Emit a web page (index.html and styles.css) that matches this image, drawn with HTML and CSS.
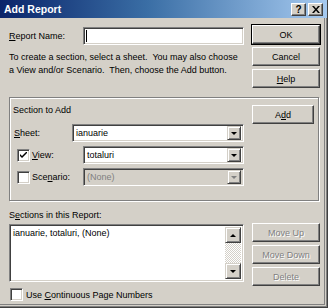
FILE: index.html
```html
<!DOCTYPE html>
<html lang="en">

<head>
    <meta charset="UTF-8">
    <title>Add Report</title>
    <link rel="stylesheet" href="styles.css">
</head>

<body>

    <div class="window">
        <div class="titlebar">
            <span class="title">Add Report</span>
            <div class="title-buttons">
                <span class="tbtn">?</span>
                <span class="tbtn">
                    <svg width="8" height="7" viewBox="0 0 8 7">
                        <path d="M0 0h2l2 2.5L6 0h2L5 3.5 8 7H6L4 4.5 2 7H0l3-3.5z" fill="#000" />
                    </svg>
                </span>
            </div>
        </div>

        <div class="content">
            <div class="top">
                <div class="col-left">
                    <div class="name-row">
                        <label class="name-label"><u>R</u>eport Name:</label>
                        <div class="field name-input"><span class="caret"></span></div>
                    </div>
                    <p class="hint">To create a section, select a sheet.&nbsp; You may also choose<br>a View and/or Scenario.&nbsp; Then, choose the Add button.</p>
                </div>
                <div class="col-right">
                    <button class="btn default">OK</button>
                    <button class="btn">Cancel</button>
                    <button class="btn"><u>H</u>elp</button>
                </div>
            </div>

            <div class="group">
                <div class="group-main">
                    <div class="group-title">Section to Add</div>
                    <div class="row">
                        <label class="row-label sheet-label"><u>S</u>heet:</label>
                        <div class="field combo sheet-combo">
                            <span class="combo-text">ianuarie</span>
                            <span class="drop"><i class="arrow"></i></span>
                        </div>
                    </div>
                    <div class="row">
                        <span class="check checked">
                            <svg width="7" height="7" viewBox="0 0 7 7">
                                <path d="M0 2l2 2 5-5v2L2 6 0 4z" fill="#000" />
                            </svg>
                        </span>
                        <label class="row-label check-label"><u>V</u>iew:</label>
                        <div class="field combo">
                            <span class="combo-text">totaluri</span>
                            <span class="drop"><i class="arrow"></i></span>
                        </div>
                    </div>
                    <div class="row">
                        <span class="check"></span>
                        <label class="row-label check-label">Sce<u>n</u>ario:</label>
                        <div class="field combo disabled">
                            <span class="combo-text">(None)</span>
                            <span class="drop"><i class="arrow"></i></span>
                        </div>
                    </div>
                </div>
                <div class="group-side">
                    <button class="btn add-btn">A<u>d</u>d</button>
                </div>
            </div>

            <div class="sections-label">S<u>e</u>ctions in this Report:</div>
            <div class="sections">
                <div class="field listbox">
                    <div class="list-items">
                        <div class="list-item">ianuarie, totaluri, (None)</div>
                    </div>
                    <div class="scrollbar">
                        <span class="sbtn"><i class="arrow up"></i></span>
                        <span class="track"></span>
                        <span class="sbtn"><i class="arrow"></i></span>
                    </div>
                </div>
                <div class="col-right list-buttons">
                    <button class="btn" disabled>Move Up</button>
                    <button class="btn" disabled>Move Down</button>
                    <button class="btn" disabled>Delete</button>
                </div>
            </div>

            <div class="footer-row">
                <span class="check"></span>
                <label class="footer-label">Use <u>C</u>ontinuous Page Numbers</label>
            </div>
        </div>
    </div>

</body>

</html>
```

FILE: styles.css
```css
body {
    margin: 0;
    font-family: "Liberation Sans", Arial, sans-serif;
    font-size: 9px;
    color: #000;
    background: #d4d0c8;
}

.window {
    width: 328px;
    height: 308px;
    box-sizing: border-box;
    background: #d4d0c8;
    border-right: 1px solid #404040;
    border-bottom: 1px solid #404040;
    box-shadow: inset -1px -1px 0 #808080, inset -2px -2px 0 #d4d0c8, inset -3px -3px 0 #808080;
    overflow: hidden;
}

.titlebar {
    height: 18px;
    display: flex;
    align-items: center;
    justify-content: space-between;
    background: linear-gradient(to right, #0a246a, #3a6ea5 45%, #a6caf0);
    padding: 0 4px 0 4px;
}

.title {
    color: #fff;
    font-weight: bold;
    font-size: 10.5px;
}

.title-buttons {
    display: flex;
    gap: 2px;
}

.tbtn {
    width: 13px;
    height: 11px;
    display: flex;
    align-items: center;
    justify-content: center;
    font-weight: bold;
    font-size: 10px;
    background: #d4d0c8;
    border: 1px solid;
    border-color: #fff #404040 #404040 #fff;
    box-shadow: inset -1px -1px 0 #808080;
}

.content {
    padding: 0 0 0 9px;
}

.top {
    display: flex;
    gap: 8px;
    height: 79px;
}

.col-left {
    width: 235px;
}

.col-right {
    width: 68px;
    display: flex;
    flex-direction: column;
    gap: 3px;
}

.top .col-right {
    padding-top: 7px;
}

.name-row {
    display: flex;
    align-items: center;
    margin-top: 9px;
}

.name-label {
    width: 74px;
}

.name-input {
    width: 161px;
    height: 18px;
}

.caret {
    display: block;
    width: 1px;
    height: 12px;
    margin: 2px 0 0 2px;
    background: #000;
}

.hint {
    margin: 6px 0 0 0;
    line-height: 13px;
    white-space: nowrap;
}

.btn {
    height: 19px;
    padding: 0;
    font-family: inherit;
    font-size: 9px;
    color: #000;
    background: #d4d0c8;
    border: 1px solid;
    border-color: #fff #404040 #404040 #fff;
    box-shadow: inset -1px -1px 0 #808080;
}

.btn.default {
    outline: 1px solid #000;
    outline-offset: 0;
}

.btn:disabled {
    color: #808080;
    text-shadow: 1px 1px 0 #fff;
}

.field {
    box-sizing: border-box;
    background: #fff;
    border: 1px solid;
    border-color: #808080 #fff #fff #808080;
    box-shadow: inset 1px 1px 0 #404040, inset -1px -1px 0 #d4d0c8;
}

.group {
    display: flex;
    width: 310px;
    height: 104px;
    box-sizing: border-box;
    border: 1px solid #808080;
    box-shadow: inset 1px 1px 0 #fff, 1px 1px 0 #fff;
}

.group-main {
    width: 234px;
    padding: 6px 0 0 0;
}

.group-title {
    line-height: 13px;
    padding-left: 3px;
    margin-bottom: 7px;
}

.row {
    display: flex;
    align-items: center;
    height: 18px;
    margin-bottom: 4px;
}

.row-label {
    flex: none;
}

.sheet-label {
    width: 58px;
    margin-left: 4px;
}

.check-label {
    width: 51px;
    margin-left: 2px;
}

.combo {
    flex: 1;
    height: 18px;
    display: flex;
    align-items: center;
    justify-content: space-between;
    padding: 2px;
}

.combo-text {
    padding-left: 1px;
}

.combo.disabled {
    background: #d4d0c8;
    color: #808080;
}

.drop,
.sbtn {
    width: 16px;
    height: 12px;
    box-sizing: border-box;
    display: flex;
    align-items: center;
    justify-content: center;
    background: #d4d0c8;
    border: 1px solid;
    border-color: #d4d0c8 #404040 #404040 #d4d0c8;
    box-shadow: inset 1px 1px 0 #fff, inset -1px -1px 0 #808080;
}

.drop {
    width: 14px;
    height: 14px;
}

.arrow {
    width: 0;
    height: 0;
    border-left: 3px solid transparent;
    border-right: 3px solid transparent;
    border-top: 3px solid #000;
}

.arrow.up {
    border-top: none;
    border-bottom: 3px solid #000;
}

.disabled .arrow {
    border-top-color: #808080;
}

.check {
    flex: none;
    width: 13px;
    height: 13px;
    box-sizing: border-box;
    margin-left: 7px;
    display: flex;
    align-items: center;
    justify-content: center;
    background: #fff;
    border: 1px solid;
    border-color: #808080 #fff #fff #808080;
    box-shadow: inset 1px 1px 0 #404040, inset -1px -1px 0 #d4d0c8;
}

.group-side {
    margin-left: 8px;
    padding-top: 7px;
}

.add-btn {
    width: 62px;
}

.sections-label {
    margin-top: 8px;
    line-height: 13px;
}

.sections {
    display: flex;
    gap: 8px;
    margin-top: 2px;
}

.listbox {
    width: 235px;
    height: 58px;
    display: flex;
    padding: 2px;
}

.list-items {
    flex: 1;
    padding-left: 1px;
}

.list-item {
    line-height: 13px;
}

.scrollbar {
    width: 16px;
    display: flex;
    flex-direction: column;
}

.sbtn {
    height: 16px;
}

.track {
    flex: 1;
    background: repeating-conic-gradient(#fff 0 25%, #d4d0c8 0 50%) 0 0 / 2px 2px;
}

.list-buttons {
    margin-top: -1px;
}

.footer-row {
    display: flex;
    align-items: center;
    margin-top: 2px;
}

.footer-row .check {
    margin-left: 1px;
}

.footer-label {
    margin-left: 3px;
}
```
